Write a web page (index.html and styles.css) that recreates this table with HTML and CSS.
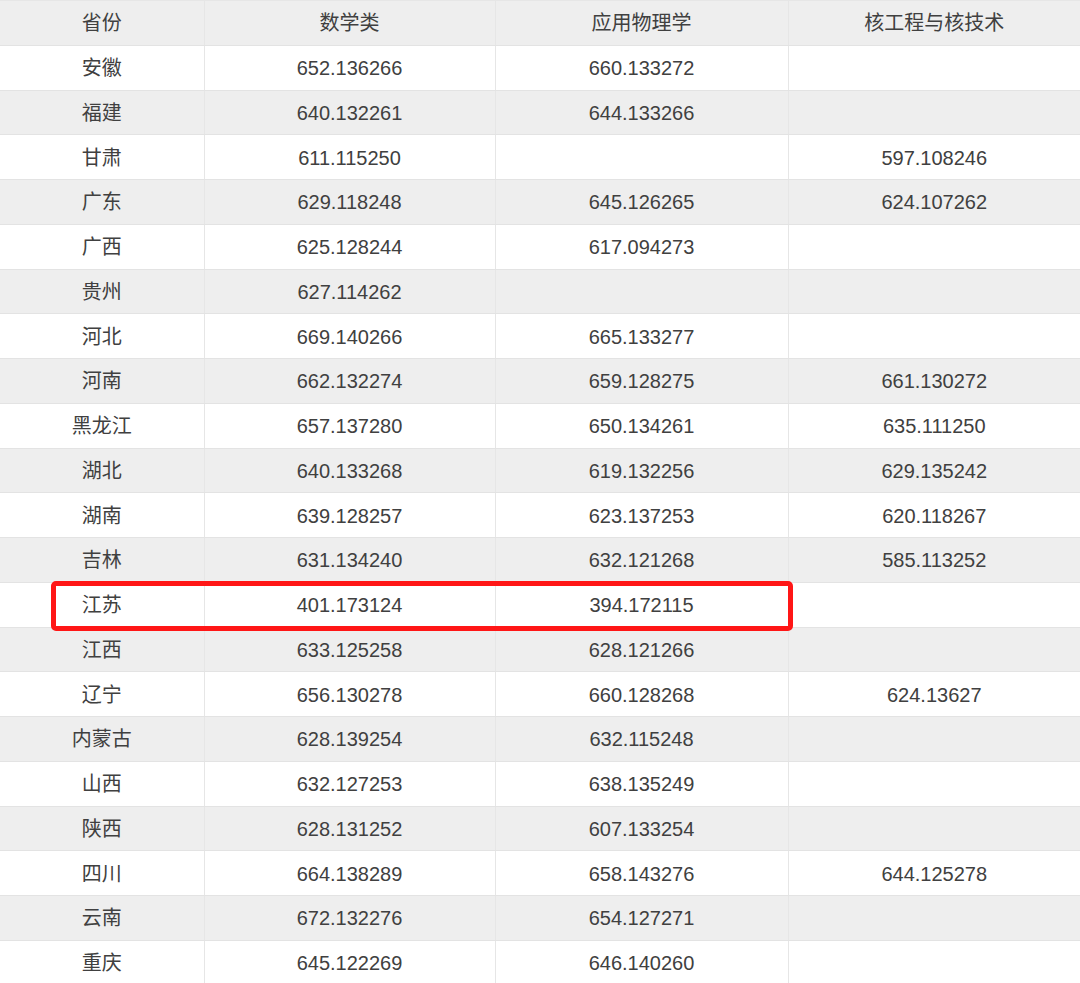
FILE: index.html
```html
<!DOCTYPE html>
<html lang="zh">
<head>
<meta charset="utf-8">
<link rel="stylesheet" href="styles.css">
</head>
<body>
<div class="wrap">
<table class="score">
<thead>
<tr><th class="c1">省份</th><th class="c2">数学类</th><th class="c3">应用物理学</th><th class="c4">核工程与核技术</th></tr>
</thead>
<tbody>
<tr><td>安徽</td><td>652.136266</td><td>660.133272</td><td></td></tr>
<tr><td>福建</td><td>640.132261</td><td>644.133266</td><td></td></tr>
<tr><td>甘肃</td><td>611.115250</td><td></td><td>597.108246</td></tr>
<tr><td>广东</td><td>629.118248</td><td>645.126265</td><td>624.107262</td></tr>
<tr><td>广西</td><td>625.128244</td><td>617.094273</td><td></td></tr>
<tr><td>贵州</td><td>627.114262</td><td></td><td></td></tr>
<tr><td>河北</td><td>669.140266</td><td>665.133277</td><td></td></tr>
<tr><td>河南</td><td>662.132274</td><td>659.128275</td><td>661.130272</td></tr>
<tr><td>黑龙江</td><td>657.137280</td><td>650.134261</td><td>635.111250</td></tr>
<tr><td>湖北</td><td>640.133268</td><td>619.132256</td><td>629.135242</td></tr>
<tr><td>湖南</td><td>639.128257</td><td>623.137253</td><td>620.118267</td></tr>
<tr><td>吉林</td><td>631.134240</td><td>632.121268</td><td>585.113252</td></tr>
<tr><td>江苏</td><td>401.173124</td><td>394.172115</td><td></td></tr>
<tr><td>江西</td><td>633.125258</td><td>628.121266</td><td></td></tr>
<tr><td>辽宁</td><td>656.130278</td><td>660.128268</td><td>624.13627</td></tr>
<tr><td>内蒙古</td><td>628.139254</td><td>632.115248</td><td></td></tr>
<tr><td>山西</td><td>632.127253</td><td>638.135249</td><td></td></tr>
<tr><td>陕西</td><td>628.131252</td><td>607.133254</td><td></td></tr>
<tr><td>四川</td><td>664.138289</td><td>658.143276</td><td>644.125278</td></tr>
<tr><td>云南</td><td>672.132276</td><td>654.127271</td><td></td></tr>
<tr><td>重庆</td><td>645.122269</td><td>646.140260</td><td></td></tr>
</tbody>
</table>
<div class="highlight"></div>
</div>
</body>
</html>
```

FILE: styles.css
```css
html, body {
  margin: 0;
  padding: 0;
  background: #ffffff;
}
.wrap {
  position: relative;
  width: 1080px;
  height: 983px;
  overflow: hidden;
}
.score {
  width: 1080px;
  border-collapse: collapse;
  table-layout: fixed;
  font-family: "Liberation Sans", "Noto Sans CJK SC", sans-serif;
  font-size: 20px;
  color: #404040;
}
.score th,
.score td {
  height: 44.75px;
  padding: 1px 0 0;
  text-align: center;
  vertical-align: middle;
  font-weight: normal;
  border-left: 1px solid #e6e6e6;
  border-right: 1px solid #e6e6e6;
  border-bottom: 1px solid #e3e3e3;
  box-sizing: border-box;
  line-height: 1;
}
.score th:first-child,
.score td:first-child {
  border-left: none;
}
.score th:last-child,
.score td:last-child {
  border-right: none;
}
.score thead tr {
  background: #eeeeee;
}
.score thead th {
  border-top: 1px solid #e6e6e6;
}
.score tbody tr:nth-child(even) {
  background: #eeeeee;
}
.score tbody tr:nth-child(odd) {
  background: #ffffff;
}
.c1 { width: 204px; }
.c2 { width: 291px; }
.c3 { width: 293px; }
.c4 { width: 292px; }
.highlight {
  position: absolute;
  left: 51px;
  top: 581px;
  width: 742px;
  height: 50px;
  border: 5px solid #ff1616;
  border-radius: 5px;
  box-sizing: border-box;
}
```
